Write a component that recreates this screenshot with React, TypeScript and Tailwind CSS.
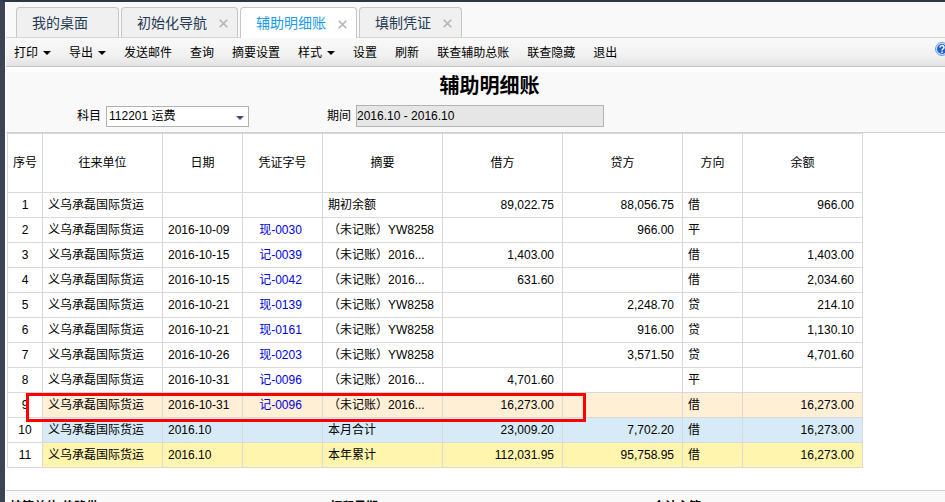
import { useState } from "react";

const tabs = [
  { label: "我的桌面", closable: false, width: "w-[103px]" },
  { label: "初始化导航", closable: true, width: "w-[117px]" },
  { label: "辅助明细账", closable: true, width: "w-[117px]" },
  { label: "填制凭证", closable: true, width: "w-[103px]" },
];

const actions = [
  { label: "打印", menu: true },
  { label: "导出", menu: true },
  { label: "发送邮件" },
  { label: "查询" },
  { label: "摘要设置" },
  { label: "样式", menu: true },
  { label: "设置" },
  { label: "刷新" },
  { label: "联查辅助总账" },
  { label: "联查隐藏" },
  { label: "退出" },
];

const headers = ["序号", "往来单位", "日期", "凭证字号", "摘要", "借方", "贷方", "方向", "余额"];

type Row = {
  date: string;
  voucher: string;
  summary: string;
  debit: string;
  credit: string;
  side: string;
  balance: string;
  tone?: string;
};

const rows: Row[] = [
  { date: "", voucher: "", summary: "期初余额", debit: "89,022.75", credit: "88,056.75", side: "借", balance: "966.00" },
  { date: "2016-10-09", voucher: "现-0030", summary: "（未记账）YW8258", debit: "", credit: "966.00", side: "平", balance: "" },
  { date: "2016-10-15", voucher: "记-0039", summary: "（未记账）2016...", debit: "1,403.00", credit: "", side: "借", balance: "1,403.00" },
  { date: "2016-10-15", voucher: "记-0042", summary: "（未记账）2016...", debit: "631.60", credit: "", side: "借", balance: "2,034.60" },
  { date: "2016-10-21", voucher: "现-0139", summary: "（未记账）YW8258", debit: "", credit: "2,248.70", side: "贷", balance: "214.10" },
  { date: "2016-10-21", voucher: "现-0161", summary: "（未记账）YW8258", debit: "", credit: "916.00", side: "贷", balance: "1,130.10" },
  { date: "2016-10-26", voucher: "现-0203", summary: "（未记账）YW8258", debit: "", credit: "3,571.50", side: "贷", balance: "4,701.60" },
  { date: "2016-10-31", voucher: "记-0096", summary: "（未记账）2016...", debit: "4,701.60", credit: "", side: "平", balance: "" },
  { date: "2016-10-31", voucher: "记-0096", summary: "（未记账）2016...", debit: "16,273.00", credit: "", side: "借", balance: "16,273.00", tone: "bg-[#ffefd5]" },
  { date: "2016.10", voucher: "", summary: "本月合计", debit: "23,009.20", credit: "7,702.20", side: "借", balance: "16,273.00", tone: "bg-[#d7eaf8]" },
  { date: "2016.10", voucher: "", summary: "本年累计", debit: "112,031.95", credit: "95,758.95", side: "借", balance: "16,273.00", tone: "bg-[#fff5ad]" },
];

function Caret() {
  return (
    <svg width="8" height="4" viewBox="0 0 8 4" aria-hidden="true">
      <path d="M0 0H8L4 4Z" fill="#000" />
    </svg>
  );
}

function Tabs() {
  const [active, setActive] = useState(2);
  return (
    <nav className="flex h-9 shrink-0 items-end gap-[2px] border-b border-[#d6d6d6] bg-[#f9f9f9] pl-[10px]">
      {tabs.map((tab, i) => (
        <div
          key={tab.label}
          className={`flex items-center rounded-t border border-b-0 border-[#c6c6c6] pl-[15px] ${tab.width} ${
            i === active ? "-mb-px h-[31px] bg-white text-[#1c9be8]" : "h-[30px] bg-[#f0f0f0] text-[#263a52]"
          }`}
        >
          <button type="button" className="text-sm leading-5 whitespace-nowrap" onClick={() => setActive(i)}>
            {tab.label}
          </button>
          {tab.closable && (
            <button type="button" aria-label={`关闭${tab.label}`} className="ml-3 pt-[2px]">
              <svg width="9" height="9" viewBox="0 0 9 9" aria-hidden="true">
                <path d="M0.7 0.7L8.3 8.3M8.3 0.7L0.7 8.3" stroke="#b4b4b4" strokeWidth="1.6" />
              </svg>
            </button>
          )}
        </div>
      ))}
    </nav>
  );
}

function Toolbar() {
  return (
    <div className="flex h-[29px] shrink-0 items-center justify-between border-b border-[#c4c4c4] bg-linear-to-b from-[#f9f9f9] from-0% via-[#f2f2f2] via-60% to-[#e3e3e3] to-100% pt-[2px] pl-2">
      <div className="flex items-center gap-[18px]">
        {actions.map((a) => (
          <button key={a.label} type="button" className="flex items-center gap-[5px] whitespace-nowrap">
            {a.label}
            {a.menu && <Caret />}
          </button>
        ))}
      </div>
      <button type="button" aria-label="帮助" className="-mr-1 mb-2 shrink-0">
        <svg width="14" height="14" viewBox="0 0 14 14" aria-hidden="true">
          <circle cx="7" cy="7" r="6.4" fill="#e4f1fc" stroke="#4c92de" strokeWidth="1" />
          <circle cx="7" cy="7" r="5" fill="#1d5fd0" />
          <path d="M5 5.6C5 3 9 3 9 5.4C9 6.8 7 6.8 7 8.4M7 9.6V11" fill="none" stroke="#fff" strokeWidth="1.5" />
        </svg>
      </button>
    </div>
  );
}

function Filters() {
  return (
    <section className="mt-[5px] h-[61px] shrink-0 border-b border-[#cfcfcf] bg-[#f9f9f9]">
      <h1 className="pt-1 pl-7 text-center text-xl leading-5 font-bold">辅助明细账</h1>
      <div className="flex items-center pt-[9px] pl-[71px]">
        <label htmlFor="subject" className="w-[29px]">
          科目
        </label>
        <div className="relative w-[143px]">
          <select
            id="subject"
            className="block h-[21px] w-full appearance-none border border-[#b2b2b2] bg-white pl-[2px]"
          >
            <option>112201 运费</option>
          </select>
          <svg width="8" height="4" viewBox="0 0 8 4" className="pointer-events-none absolute top-[10px] right-[5px]" aria-hidden="true">
            <path d="M0 0H8L4 4Z" fill="#4b4a7c" />
          </svg>
        </div>
        <label htmlFor="period" className="ml-[78px] w-[29px]">
          期间
        </label>
        <input
          id="period"
          readOnly
          value="2016.10 - 2016.10"
          className="h-[22px] w-[248px] border border-[#b2b2b2] bg-[#e6e6e6]"
        />
      </div>
    </section>
  );
}

function Ledger() {
  const cell = "border border-[#d9d9d9] px-[5px] whitespace-nowrap";
  const money = "border border-[#d9d9d9] pr-2 text-right";
  return (
    <section className="shrink-0 border-b border-[#cfcfcf] pb-[22px] pl-px">
      <div className="relative w-[856px]">
        <table className="w-full table-fixed border-collapse">
          <colgroup>
            <col className="w-[35px]" />
            <col className="w-[120px]" />
            <col className="w-[80px]" />
            <col className="w-[80px]" />
            <col className="w-[120px]" />
            <col className="w-[120px]" />
            <col className="w-[120px]" />
            <col className="w-[60px]" />
            <col className="w-[120px]" />
          </colgroup>
          <thead>
            <tr className="h-[59px]">
              {headers.map((h) => (
                <th key={h} scope="col" className="border border-[#d9d9d9] font-normal">
                  {h}
                </th>
              ))}
            </tr>
          </thead>
          <tbody>
            {rows.map((r, i) => (
              <tr key={i} className={`h-[25px] ${r.tone ?? ""}`}>
                <td className="border border-[#d9d9d9] bg-white text-center">{i + 1}</td>
                <td className={cell}>义乌承磊国际货运</td>
                <td className={cell}>{r.date}</td>
                <td className="border border-[#d9d9d9] pr-1 text-center text-[#0000e0]">
                  {r.voucher && <a href="#voucher">{r.voucher}</a>}
                </td>
                <td className={cell}>{r.summary}</td>
                <td className={money}>{r.debit}</td>
                <td className={money}>{r.credit}</td>
                <td className={cell}>{r.side}</td>
                <td className={money}>{r.balance}</td>
              </tr>
            ))}
          </tbody>
        </table>
        <div className="pointer-events-none absolute top-[260px] left-[19px] h-[29px] w-[560px] border-3 border-[#ff0000]" />
      </div>
    </section>
  );
}

export default function App() {
  return (
    <div className="flex h-screen flex-col overflow-hidden border-t-2 border-l-5 border-t-[#2c3843] border-l-[#3b4354] bg-white pl-px font-['Liberation_Sans','Noto_Sans_CJK_SC',sans-serif] text-xs leading-4 text-black">
      <Tabs />
      <Toolbar />
      <Filters />
      <Ledger />
      <footer className="min-h-0 flex-1 bg-[#f9f9f9] pt-2 pl-1 font-bold">
        <div className="grid grid-cols-[320px_323px_1fr]">
          <span>核算单位:佳路供</span>
          <span>打印日期</span>
          <span>会计主管</span>
        </div>
      </footer>
    </div>
  );
}
